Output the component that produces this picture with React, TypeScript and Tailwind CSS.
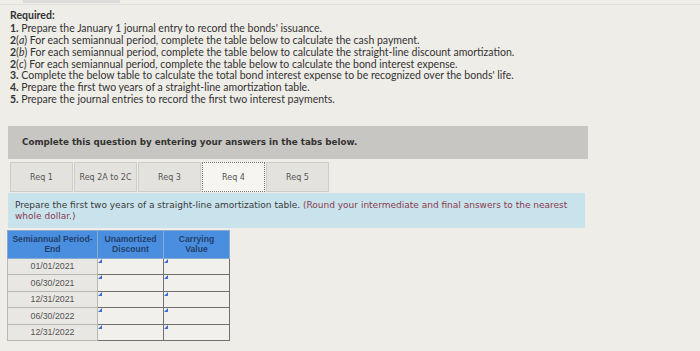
import React from 'react';

const rows = ['01/01/2021', '06/30/2021', '12/31/2021', '06/30/2022', '12/31/2022'];
const tabs = ['Req 1', 'Req 2A to 2C', 'Req 3', 'Req 4', 'Req 5'];

// small blue marker in the corner of an input cell
const InputCell = () => (
  <td className="relative border-[1.5px] border-[#707070] bg-[#f1f0ec] p-0">
    <span className="absolute left-0 top-0 h-0 w-0 border-l-[4px] border-t-[4px] border-l-transparent border-t-[#3a6fd0] [transform:rotate(90deg)]" />
  </td>
);

export default function App() {
  return (
    <div className="relative flex h-[351px] w-[700px] flex-col overflow-hidden bg-[#efede8] font-['Lato','Open_Sans',sans-serif]">
      {/* top strip */}
      <div className="flex h-[5px] border-b border-[#e2e0db]">
        <div className="ml-[23px] h-[3px] w-[97px] bg-[#dcdcdc]" />
      </div>

      {/* required list */}
      <div className="pl-[10px] pt-[5px] text-[10.5px] leading-[11.8px] text-[#333]">
        <div className="mb-[1.5px] font-bold">Required:</div>
        <div><b>1.</b> Prepare the January 1 journal entry to record the bonds' issuance.</div>
        <div><b>2</b>(<i>a</i>) For each semiannual period, complete the table below to calculate the cash payment.</div>
        <div><b>2</b>(<i>b</i>) For each semiannual period, complete the table below to calculate the straight-line discount amortization.</div>
        <div><b>2</b>(<i>c</i>) For each semiannual period, complete the table below to calculate the bond interest expense.</div>
        <div><b>3.</b> Complete the below table to calculate the total bond interest expense to be recognized over the bonds' life.</div>
        <div><b>4.</b> Prepare the first two years of a straight-line amortization table.</div>
        <div><b>5.</b> Prepare the journal entries to record the first two interest payments.</div>
      </div>

      {/* instruction bar */}
      <div className="ml-[8px] mt-[20px] flex h-[33px] w-[580px] items-center bg-[#c7c6c2] pl-[14px] font-['DejaVu_Sans',sans-serif] text-[8.75px] font-bold text-[#333]">
        Complete this question by entering your answers in the tabs below.
      </div>

      {/* tabs */}
      <div className="ml-[10px] mt-[3px] flex h-[30px] gap-[1px] font-['DejaVu_Sans',sans-serif] text-[8px] text-[#555]">
        {tabs.map((t) =>
          t === 'Req 4' ? (
            <div key={t} className="flex w-[63px] items-center justify-center border border-dotted border-[#777] bg-[#f6f5f2] pt-[3px]">
              {t}
            </div>
          ) : (
            <div key={t} className="flex w-[63px] items-center justify-center border border-[#cfcdc8] bg-[#e4e2de] pt-[2px]">
              {t}
            </div>
          )
        )}
      </div>

      {/* question band */}
      <div className="ml-[8px] mt-[1px] h-[35px] w-[577px] bg-[#c9e3ec] px-[7px] pt-[7px] font-['DejaVu_Sans',sans-serif] text-[9px] leading-[11px] text-[#3a3a3a]">
        Prepare the first two years of a straight-line amortization table.{' '}
        <span className="text-[#8a3a50]">(Round your intermediate and final answers to the nearest whole dollar.)</span>
      </div>

      {/* amortization table */}
      <table className="ml-[7px] mt-[2px] w-[222px] table-fixed border-collapse font-['Liberation_Sans',Arial,sans-serif]">
        <thead>
          <tr className="h-[28px] bg-[#4a8fdf] text-[8.6px] font-bold leading-[10px] text-[#233f6c]">
            <th className="w-[90px] border border-[#8aa9cf] font-bold">Semiannual Period-<br />End</th>
            <th className="w-[66px] border border-[#8aa9cf] font-bold">Unamortized<br />Discount</th>
            <th className="w-[66px] border border-[#8aa9cf] font-bold">Carrying<br />Value</th>
          </tr>
        </thead>
        <tbody>
          {rows.map((d) => (
            <tr key={d} className="h-[16.5px]">
              <td className="border border-[#b9b7b2] bg-[#e9e7e3] text-center text-[8.8px] text-[#555]">{d}</td>
              <InputCell />
              <InputCell />
            </tr>
          ))}
        </tbody>
      </table>
    </div>
  );
}
